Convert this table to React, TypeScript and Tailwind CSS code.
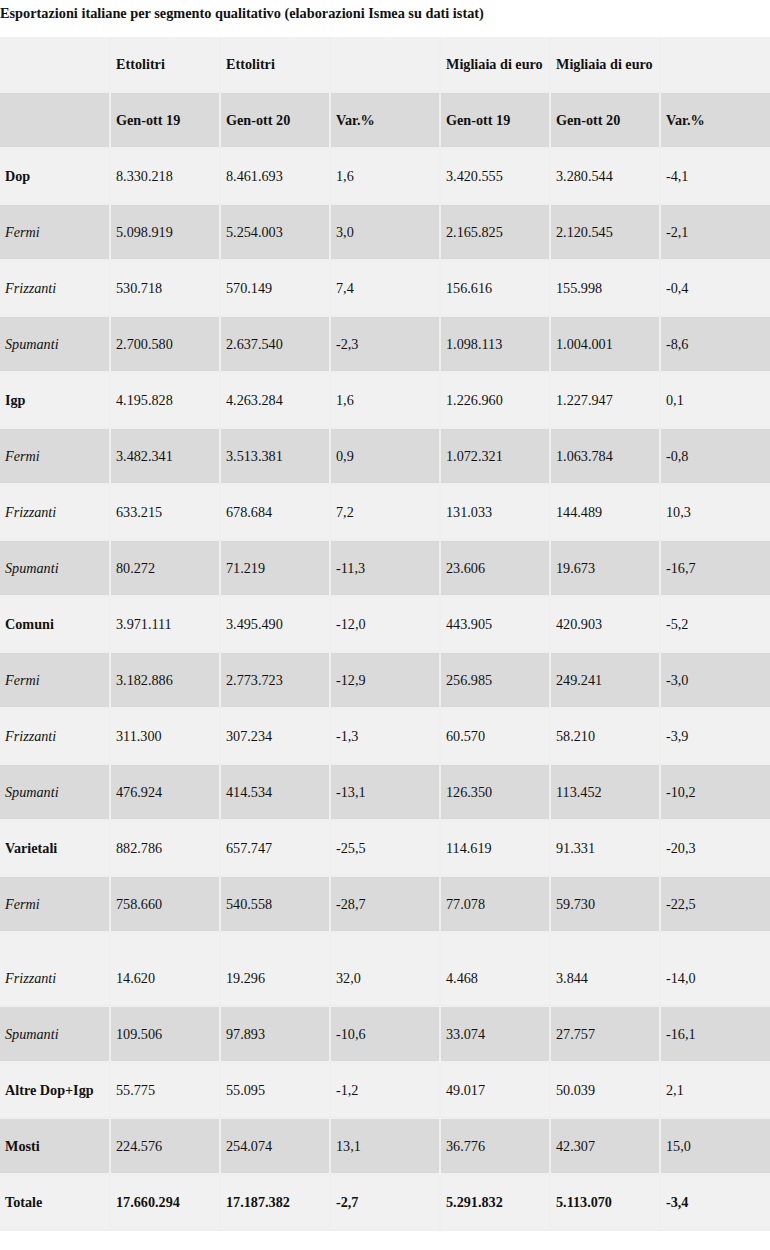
type Row = {
  label: string;
  kind: "bold" | "italic";
  values: string[];
  tall?: boolean;
};

const rows: Row[] = [
  { label: "Dop", kind: "bold", values: ["8.330.218", "8.461.693", "1,6", "3.420.555", "3.280.544", "-4,1"] },
  { label: "Fermi", kind: "italic", values: ["5.098.919", "5.254.003", "3,0", "2.165.825", "2.120.545", "-2,1"] },
  { label: "Frizzanti", kind: "italic", values: ["530.718", "570.149", "7,4", "156.616", "155.998", "-0,4"] },
  { label: "Spumanti", kind: "italic", values: ["2.700.580", "2.637.540", "-2,3", "1.098.113", "1.004.001", "-8,6"] },
  { label: "Igp", kind: "bold", values: ["4.195.828", "4.263.284", "1,6", "1.226.960", "1.227.947", "0,1"] },
  { label: "Fermi", kind: "italic", values: ["3.482.341", "3.513.381", "0,9", "1.072.321", "1.063.784", "-0,8"] },
  { label: "Frizzanti", kind: "italic", values: ["633.215", "678.684", "7,2", "131.033", "144.489", "10,3"] },
  { label: "Spumanti", kind: "italic", values: ["80.272", "71.219", "-11,3", "23.606", "19.673", "-16,7"] },
  { label: "Comuni", kind: "bold", values: ["3.971.111", "3.495.490", "-12,0", "443.905", "420.903", "-5,2"] },
  { label: "Fermi", kind: "italic", values: ["3.182.886", "2.773.723", "-12,9", "256.985", "249.241", "-3,0"] },
  { label: "Frizzanti", kind: "italic", values: ["311.300", "307.234", "-1,3", "60.570", "58.210", "-3,9"] },
  { label: "Spumanti", kind: "italic", values: ["476.924", "414.534", "-13,1", "126.350", "113.452", "-10,2"] },
  { label: "Varietali", kind: "bold", values: ["882.786", "657.747", "-25,5", "114.619", "91.331", "-20,3"] },
  { label: "Fermi", kind: "italic", values: ["758.660", "540.558", "-28,7", "77.078", "59.730", "-22,5"] },
  { label: "Frizzanti", kind: "italic", values: ["14.620", "19.296", "32,0", "4.468", "3.844", "-14,0"], tall: true },
  { label: "Spumanti", kind: "italic", values: ["109.506", "97.893", "-10,6", "33.074", "27.757", "-16,1"] },
  { label: "Altre Dop+Igp", kind: "bold", values: ["55.775", "55.095", "-1,2", "49.017", "50.039", "2,1"] },
  { label: "Mosti", kind: "bold", values: ["224.576", "254.074", "13,1", "36.776", "42.307", "15,0"] },
];

const total = ["17.660.294", "17.187.382", "-2,7", "5.291.832", "5.113.070", "-3,4"];

const cell =
  "border-r-2 border-b-2 border-[#efefef] last:border-r-0 px-[5px] py-[19px] leading-4 align-middle text-left";

const App = () => {
  return (
    <div className="w-[770px] bg-white text-[#111] font-['Liberation_Serif','Times_New_Roman',serif]">
      <h1 className="text-[14.3px] font-bold leading-[26px] whitespace-nowrap">
        Esportazioni italiane per segmento qualitativo (elaborazioni Ismea su dati istat)
      </h1>

      <table className="mt-[11px] w-full table-fixed border-collapse text-[14.2px]">
        <thead>
          <tr className="bg-[#f1f1f1] font-bold">
            <th className={cell}></th>
            <th className={cell}>Ettolitri</th>
            <th className={cell}>Ettolitri</th>
            <th className={cell}></th>
            <th className={cell + " whitespace-nowrap"}>Migliaia di euro</th>
            <th className={cell + " whitespace-nowrap"}>Migliaia di euro</th>
            <th className={cell}></th>
          </tr>
          <tr className="bg-[#dadada] font-bold">
            <th className={cell}></th>
            <th className={cell}>Gen-ott 19</th>
            <th className={cell}>Gen-ott 20</th>
            <th className={cell}>Var.%</th>
            <th className={cell}>Gen-ott 19</th>
            <th className={cell}>Gen-ott 20</th>
            <th className={cell}>Var.%</th>
          </tr>
        </thead>
        <tbody>
          {rows.map((r, i) => (
            <tr key={i} className={i % 2 === 0 ? "bg-[#f1f1f1]" : "bg-[#dadada]"}>
              <td
                className={
                  cell +
                  (r.kind === "bold" ? " font-bold whitespace-nowrap" : " italic") +
                  (r.tall ? " !pt-[37px]" : "")
                }
              >
                {r.label}
              </td>
              {r.values.map((v, j) => (
                <td key={j} className={cell + (r.tall ? " !pt-[37px]" : "")}>
                  {v}
                </td>
              ))}
            </tr>
          ))}
          <tr className="bg-[#f1f1f1] font-bold">
            <td className={cell}>Totale</td>
            {total.map((v, j) => (
              <td key={j} className={cell}>
                {v}
              </td>
            ))}
          </tr>
        </tbody>
      </table>
    </div>
  );
};

export default App;
